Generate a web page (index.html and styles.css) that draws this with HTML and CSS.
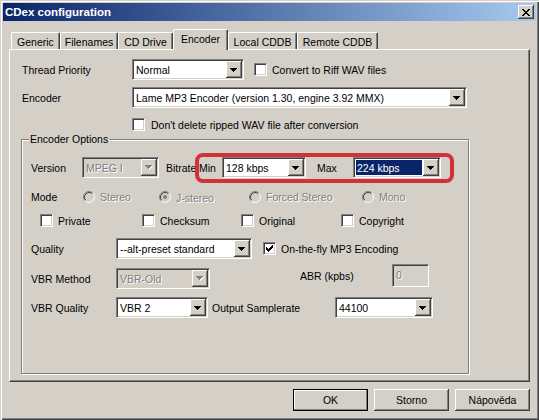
FILE: index.html
```html
<!DOCTYPE html>
<html>
<head>
<meta charset="utf-8">
<title>CDex configuration</title>
<link rel="stylesheet" href="styles.css">
</head>
<body>
<div class="window">
  <div class="titlebar">
    <span class="title">CDex configuration</span>
    <span class="close"><svg width="8" height="7" viewBox="0 0 8 7" shape-rendering="crispEdges"><path d="M0 0h2v1h-2zM6 0h2v1h-2zM1 1h2v1h-2zM5 1h2v1h-2zM2 2h4v1h-4zM3 3h2v1h-2zM2 4h4v1h-4zM1 5h2v1h-2zM5 5h2v1h-2zM0 6h2v1h-2zM6 6h2v1h-2z"/></svg></span>
  </div>
  <div class="client">
    <div class="tabs">
      <div class="tab t-generic">Generic</div>
      <div class="tab t-filenames">Filenames</div>
      <div class="tab t-cddrive">CD Drive</div>
      <div class="tab t-encoder sel">Encoder</div>
      <div class="tab t-local">Local CDDB</div>
      <div class="tab t-remote">Remote CDDB</div>
    </div>
    <div class="panel">
      <div class="row r-thread">
        <span class="lbl-top">Thread Priority</span>
        <div class="combo w-thread"><span class="val">Normal</span><span class="arrow"><svg width="7" height="4" viewBox="0 0 7 4" shape-rendering="crispEdges"><path d="M0 0H7V1H6V2H5V3H4V4H3V3H2V2H1V1H0Z"/></svg></span></div>
        <span class="chk ml-10"></span><span class="ctext">Convert to Riff WAV files</span>
      </div>
      <div class="row r-encoder">
        <span class="lbl-top">Encoder</span>
        <div class="combo w-encoder"><span class="val">Lame MP3 Encoder (version 1.30, engine 3.92 MMX)</span><span class="arrow"><svg width="7" height="4" viewBox="0 0 7 4" shape-rendering="crispEdges"><path d="M0 0H7V1H6V2H5V3H4V4H3V3H2V2H1V1H0Z"/></svg></span></div>
      </div>
      <div class="row r-dontdelete">
        <span class="chk"></span><span class="ctext ml-6">Don't delete ripped WAV file after conversion</span>
      </div>

      <div class="group">
        <span class="legend">Encoder Options</span>
        <div class="annot"></div>

        <div class="row g-version">
          <span class="lbl w-version">Version</span>
          <div class="combo disabled w-mpeg"><span class="val dis">MPEG I</span><span class="arrow"><svg width="8" height="5" viewBox="0 0 8 5" shape-rendering="crispEdges"><path fill="#fff" d="M1 1H8V2H7V3H6V4H5V5H4V4H3V3H2V2H1Z"/><path fill="#808080" d="M0 0H7V1H6V2H5V3H4V4H3V3H2V2H1V1H0Z"/></svg></span></div>
          <span class="lbl w-bitrate ml-7">Bitrate</span>
          <span class="lbl w-min">Min</span>
          <div class="combo w-min-combo"><span class="val">128 kbps</span><span class="arrow"><svg width="7" height="4" viewBox="0 0 7 4" shape-rendering="crispEdges"><path d="M0 0H7V1H6V2H5V3H4V4H3V3H2V2H1V1H0Z"/></svg></span></div>
          <span class="lbl w-max ml-11">Max</span>
          <div class="combo w-max-combo"><span class="val"><span class="hl">224 kbps</span></span><span class="arrow"><svg width="7" height="4" viewBox="0 0 7 4" shape-rendering="crispEdges"><path d="M0 0H7V1H6V2H5V3H4V4H3V3H2V2H1V1H0Z"/></svg></span></div>
        </div>

        <div class="row g-mode">
          <span class="lbl w-mode">Mode</span>
          <span class="opt w-stereo"><svg class="radio" width="12" height="12" viewBox="0 0 12 12"><circle cx="6" cy="6" r="4.5" fill="#d4d0c8"/><path d="M2.11 9.89A5.5 5.5 0 0 1 9.89 2.11" fill="none" stroke="#808080"/><path d="M9.89 2.11A5.5 5.5 0 0 1 2.11 9.89" fill="none" stroke="#fff"/><path d="M2.82 9.18A4.5 4.5 0 0 1 9.18 2.82" fill="none" stroke="#404040"/><path d="M9.18 2.82A4.5 4.5 0 0 1 2.82 9.18" fill="none" stroke="#d4d0c8"/></svg><span class="otext dis">Stereo</span></span>
          <span class="opt w-jstereo"><svg class="radio" width="12" height="12" viewBox="0 0 12 12"><circle cx="6" cy="6" r="4.5" fill="#d4d0c8"/><path d="M2.11 9.89A5.5 5.5 0 0 1 9.89 2.11" fill="none" stroke="#808080"/><path d="M9.89 2.11A5.5 5.5 0 0 1 2.11 9.89" fill="none" stroke="#fff"/><path d="M2.82 9.18A4.5 4.5 0 0 1 9.18 2.82" fill="none" stroke="#404040"/><path d="M9.18 2.82A4.5 4.5 0 0 1 2.82 9.18" fill="none" stroke="#d4d0c8"/><circle cx="6" cy="6" r="2" fill="#808080"/></svg><span class="otext dis jlow">J-stereo</span></span>
          <span class="opt w-forced"><svg class="radio" width="12" height="12" viewBox="0 0 12 12"><circle cx="6" cy="6" r="4.5" fill="#d4d0c8"/><path d="M2.11 9.89A5.5 5.5 0 0 1 9.89 2.11" fill="none" stroke="#808080"/><path d="M9.89 2.11A5.5 5.5 0 0 1 2.11 9.89" fill="none" stroke="#fff"/><path d="M2.82 9.18A4.5 4.5 0 0 1 9.18 2.82" fill="none" stroke="#404040"/><path d="M9.18 2.82A4.5 4.5 0 0 1 2.82 9.18" fill="none" stroke="#d4d0c8"/></svg><span class="otext dis">Forced Stereo</span></span>
          <span class="opt"><svg class="radio" width="12" height="12" viewBox="0 0 12 12"><circle cx="6" cy="6" r="4.5" fill="#d4d0c8"/><path d="M2.11 9.89A5.5 5.5 0 0 1 9.89 2.11" fill="none" stroke="#808080"/><path d="M9.89 2.11A5.5 5.5 0 0 1 2.11 9.89" fill="none" stroke="#fff"/><path d="M2.82 9.18A4.5 4.5 0 0 1 9.18 2.82" fill="none" stroke="#404040"/><path d="M9.18 2.82A4.5 4.5 0 0 1 2.82 9.18" fill="none" stroke="#d4d0c8"/></svg><span class="otext dis">Mono</span></span>
        </div>

        <div class="row g-flags">
          <span class="opt w-private"><span class="chk"></span><span class="otext">Private</span></span>
          <span class="opt w-checksum"><span class="chk"></span><span class="otext">Checksum</span></span>
          <span class="opt w-original"><span class="chk"></span><span class="otext">Original</span></span>
          <span class="opt"><span class="chk"></span><span class="otext">Copyright</span></span>
        </div>

        <div class="row g-quality">
          <span class="lbl w-glabel">Quality</span>
          <div class="combo w-quality"><span class="val">--alt-preset standard</span><span class="arrow"><svg width="7" height="4" viewBox="0 0 7 4" shape-rendering="crispEdges"><path d="M0 0H7V1H6V2H5V3H4V4H3V3H2V2H1V1H0Z"/></svg></span></div>
          <span class="chk ml-11"><svg width="7" height="7" viewBox="0 0 7 7" shape-rendering="crispEdges"><path d="M6 0h1v1h-1zM5 1h2v1h-2zM0 2h1v1h-1zM4 2h3v1h-3zM0 3h2v1h-2zM3 3h3v1h-3zM0 4h5v1h-5zM1 5h3v1h-3zM2 6h1v1h-1z"/></svg></span>
          <span class="ctext">On-the-fly MP3 Encoding</span>
        </div>

        <div class="row g-vbrmethod">
          <span class="lbl w-glabel">VBR Method</span>
          <div class="combo disabled w-vbrold"><span class="val dis">VBR-Old</span><span class="arrow"><svg width="8" height="5" viewBox="0 0 8 5" shape-rendering="crispEdges"><path fill="#fff" d="M1 1H8V2H7V3H6V4H5V5H4V4H3V3H2V2H1Z"/><path fill="#808080" d="M0 0H7V1H6V2H5V3H4V4H3V3H2V2H1V1H0Z"/></svg></span></div>
          <div class="abr">
            <span class="lbl w-abr">ABR (kpbs)</span>
            <span class="edit dis">0</span>
          </div>
        </div>

        <div class="row g-vbrquality">
          <span class="lbl w-glabel">VBR Quality</span>
          <div class="combo w-vbr2"><span class="val">VBR 2</span><span class="arrow"><svg width="7" height="4" viewBox="0 0 7 4" shape-rendering="crispEdges"><path d="M0 0H7V1H6V2H5V3H4V4H3V3H2V2H1V1H0Z"/></svg></span></div>
          <span class="lbl w-samplerate ml-4">Output Samplerate</span>
          <div class="combo w-44100"><span class="val">44100</span><span class="arrow"><svg width="7" height="4" viewBox="0 0 7 4" shape-rendering="crispEdges"><path d="M0 0H7V1H6V2H5V3H4V4H3V3H2V2H1V1H0Z"/></svg></span></div>
        </div>
      </div>
    </div>
    <div class="buttons">
      <span class="btn default">OK</span>
      <span class="btn">Storno</span>
      <span class="btn">Nápověda</span>
    </div>
  </div>
</div>
</body>
</html>
```
FILE: styles.css
```css
* { box-sizing: border-box; }
html, body { margin: 0; padding: 0; }
body {
  background: #d4d0c8;
  font-family: "Liberation Sans", Arial, sans-serif;
  font-size: 10.5px;
  color: #000;
  width: 539px;
  height: 420px;
  overflow: hidden;
}
.window {
  width: 539px;
  height: 420px;
  padding: 3px;
  box-shadow: inset 1px 1px #d4d0c8, inset 2px 2px #fff, inset -1px -1px #404040, inset -2px -2px #808080;
}
.titlebar {
  height: 18px;
  background: linear-gradient(to right, #0a246a, #a6caf0);
  display: flex;
  align-items: center;
  justify-content: space-between;
  padding: 0 2px;
}
.title { color: #fff; font-weight: bold; font-size: 11.5px; }
.close {
  width: 16px;
  height: 14px;
  background: #d4d0c8;
  box-shadow: inset -1px -1px #404040, inset 1px 1px #fff, inset -2px -2px #808080;
  display: flex;
  align-items: center;
  justify-content: center;
}
.close svg { margin-left: -1px; }
.client { padding: 8px 6px 0 6px; }
.tabs {
  height: 20px;
  margin-left: 2px;
  display: flex;
  align-items: flex-end;
  position: relative;
  z-index: 2;
}
.tab {
  height: 17px;
  display: flex;
  align-items: center;
  justify-content: center;
  border-left: 1px solid #fff;
  border-top: 1px solid #fff;
  border-right: 1px solid #404040;
  border-top-left-radius: 2px;
  border-top-right-radius: 2px;
  box-shadow: inset -1px 0 #808080;
  padding-top: 1px;
}
.tab.sel {
  height: 21px;
  margin-bottom: -1px;
  background: #d4d0c8;
  padding-top: 0;
  padding-bottom: 2px;
}
.t-generic { width: 49px; }
.t-filenames { width: 58px; }
.t-cddrive { width: 55px; }
.t-encoder { width: 55px; }
.t-local { width: 69px; }
.t-remote { width: 81px; }

.panel {
  width: 521px;
  height: 333px;
  border-left: 1px solid #fff;
  border-top: 1px solid #fff;
  border-right: 1px solid #404040;
  border-bottom: 1px solid #404040;
  box-shadow: inset -1px -1px #808080;
  padding: 9px 0 0 11px;
}
.row { display: flex; align-items: center; }
.lbl-top { width: 111px; padding-left: 1px; }
.lbl { flex: none; white-space: nowrap; }
.r-encoder { margin-top: 7px; }
.r-dontdelete { margin-top: 10px; height: 13px; margin-left: 111px; }
.ctext { margin-left: 5px; white-space: nowrap; }
.ml-4 { margin-left: 4px; }
.ml-6 { margin-left: 6px; }
.ml-7 { margin-left: 7px; }
.ml-10 { margin-left: 10px; }
.ml-11 { margin-left: 11px; }

.combo {
  flex: none;
  height: 21px;
  border: 1px solid;
  border-color: #808080 #fff #fff #808080;
  box-shadow: inset 1px 1px #404040, inset -1px -1px #d4d0c8;
  background: #fff;
  padding: 1px;
  display: flex;
}
.combo .val {
  flex: 1;
  min-width: 0;
  display: flex;
  align-items: center;
  padding-left: 2px;
  white-space: nowrap;
  overflow: hidden;
}
.combo .arrow {
  flex: none;
  width: 16px;
  background: #d4d0c8;
  box-shadow: inset -1px -1px #404040, inset 1px 1px #fff, inset -2px -2px #808080;
  display: flex;
  align-items: center;
  justify-content: center;
}
.combo .arrow svg { margin-left: -1px; }
.combo.disabled { background: #d4d0c8; }
.combo .hl {
  align-self: stretch;
  flex: 1;
  margin: 1px 1px 1px -1px;
  background: #0a246a;
  color: #fff;
  display: flex;
  align-items: center;
  padding-left: 1px;
}
.dis { color: #808080; text-shadow: 1px 1px 0 #fff; }

.w-thread { width: 112px; }
.w-encoder { width: 335px; }

.chk {
  flex: none;
  width: 13px;
  height: 13px;
  background: #fff;
  border: 1px solid;
  border-color: #808080 #fff #fff #808080;
  box-shadow: inset 1px 1px #404040, inset -1px -1px #d4d0c8;
  display: flex;
  align-items: center;
  justify-content: center;
}

.group {
  position: relative;
  margin-top: 8px;
  margin-left: 0;
  width: 448px;
  height: 235px;
  border: 1px solid #808080;
  box-shadow: 1px 1px 0 #fff, inset 1px 1px 0 #fff;
  padding: 17px 0 0 9px;
}
.legend {
  position: absolute;
  left: 7px;
  top: -8px;
  padding: 0 1px;
  line-height: 14px;
  background: #d4d0c8;
}
.annot {
  position: absolute;
  left: 173px;
  top: 13px;
  width: 259px;
  height: 30px;
  border: 4px solid #d0323a;
  border-radius: 8px;
  pointer-events: none;
}
.w-version { width: 51px; }
.w-mpeg { width: 77px; }
.w-bitrate { width: 33px; }
.w-min { width: 23px; }
.w-min-combo { width: 84px; }
.w-max { width: 36px; }
.w-max-combo { width: 88px; }

.g-mode { margin-top: 12px; height: 13px; }
.w-mode { width: 52px; }
.opt { display: flex; align-items: center; flex: none; }
.radio { flex: none; }
.otext { margin-left: 5px; white-space: nowrap; }
.jlow { position: relative; top: 1px; }
.w-stereo { width: 76px; }
.w-jstereo { width: 90px; }
.w-forced { width: 113px; }

.g-flags { margin-top: 11px; height: 13px; padding-left: 9px; }
.w-private { width: 102px; }
.w-checksum { width: 99px; }
.w-original { width: 100px; }

.g-quality { margin-top: 11px; }
.w-glabel { width: 85px; }
.w-quality { width: 136px; }

.g-vbrmethod { margin-top: 9px; }
.w-vbrold { width: 94px; }
.abr {
  display: flex;
  align-items: center;
  align-self: flex-start;
  margin-top: -4px;
  margin-left: 90px;
  height: 23px;
}
.w-abr { width: 92px; }
.edit {
  width: 37px;
  height: 23px;
  border: 1px solid;
  border-color: #808080 #fff #fff #808080;
  box-shadow: inset 1px 1px #404040, inset -1px -1px #d4d0c8;
  background: #d4d0c8;
  padding: 3px 0 0 3px;
  line-height: 14px;
}

.g-vbrquality { margin-top: 8px; }
.w-vbr2 { width: 92px; }
.w-samplerate { width: 123px; }
.w-44100 { width: 98px; }

.buttons {
  width: 521px;
  margin-top: 7px;
  display: flex;
  justify-content: flex-end;
  gap: 6px;
}
.btn {
  width: 75px;
  height: 22px;
  display: flex;
  align-items: center;
  justify-content: center;
  box-shadow: inset -1px -1px #404040, inset 1px 1px #fff, inset -2px -2px #808080;
}
.btn.default {
  border: 1px solid #000;
  box-shadow: inset -1px -1px #808080, inset 1px 1px #fff;
}
```
